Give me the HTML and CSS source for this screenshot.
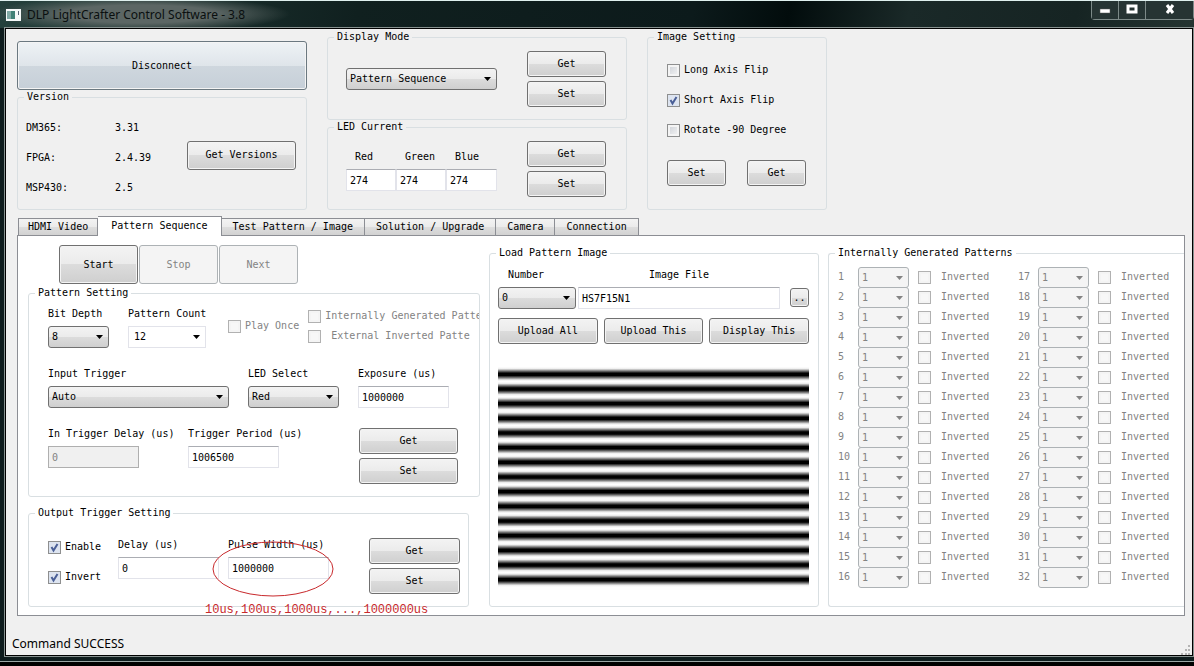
FILE: index.html
```html
<!DOCTYPE html>
<html lang="en">
  <head>
    <meta charset="UTF-8" />
    <meta name="viewport" content="width=device-width, initial-scale=1.0" />
    <title>DLP LightCrafter Control Software - 3.8</title>
    <link rel="stylesheet" href="styles.css">
  </head>
  <body>
    <header class="titlebar">
      <svg class="app-icon" width="15" height="12" viewBox="0 0 15 12">
        <rect width="15" height="12" fill="#f4f8f8" />
        <rect x="1" y="2" width="8" height="8" fill="#3f8076" />
        <rect x="1" y="2" width="4" height="8" fill="#7fa9a4" />
        <rect x="12" y="2" width="1" height="4" fill="#567" />
      </svg>
      <h1>DLP LightCrafter Control Software - 3.8</h1>
      <div class="window-buttons">
        <button aria-label="Minimize">
          <svg width="12" height="10" viewBox="0 0 12 10"><rect x="1" y="5" width="10" height="4" fill="#fff" stroke="#555" stroke-width="0.5" /></svg>
        </button>
        <button aria-label="Maximize">
          <svg width="12" height="10" viewBox="0 0 12 10"><rect x="2" y="2" width="8" height="6" fill="none" stroke="#fff" stroke-width="3" /></svg>
        </button>
        <button class="close" aria-label="Close">
          <svg width="12" height="10" viewBox="0 0 12 10"><path d="M3 1l6 8M9 1l-6 8" stroke="#fff" stroke-width="3" /></svg>
        </button>
      </div>
    </header>

    <main class="client">
      <div class="top">
        <div class="column">
          <button class="btn disconnect">Disconnect</button>
          <fieldset class="group grow">
            <legend>Version</legend>
            <div class="group-body version">
              <dl>
                <dt>DM365:</dt>
                <dd>3.31</dd>
                <dt>FPGA:</dt>
                <dd>2.4.39</dd>
                <dt>MSP430:</dt>
                <dd>2.5</dd>
              </dl>
              <button class="btn">Get Versions</button>
            </div>
          </fieldset>
        </div>

        <div class="column">
          <fieldset class="group grow">
            <legend>Display Mode</legend>
            <div class="group-body mode">
              <select aria-label="Display Mode">
                <option>Pattern Sequence</option>
              </select>
              <div class="stack">
                <button class="btn">Get</button>
                <button class="btn">Set</button>
              </div>
            </div>
          </fieldset>
          <fieldset class="group grow">
            <legend>LED Current</legend>
            <div class="group-body mode">
              <div class="led">
                <label for="led-red">Red</label>
                <label for="led-green">Green</label>
                <label for="led-blue">Blue</label>
                <input type="text" id="led-red" value="274" />
                <input type="text" id="led-green" value="274" />
                <input type="text" id="led-blue" value="274" />
              </div>
              <div class="stack">
                <button class="btn">Get</button>
                <button class="btn">Set</button>
              </div>
            </div>
          </fieldset>
        </div>

        <fieldset class="group">
          <legend>Image Setting</legend>
          <div class="group-body image-setting">
            <label class="check"><input type="checkbox" />Long Axis Flip</label>
            <label class="check"><input type="checkbox" checked />Short Axis Flip</label>
            <label class="check"><input type="checkbox" />Rotate -90 Degree</label>
            <div class="buttons">
              <button class="btn">Set</button>
              <button class="btn">Get</button>
            </div>
          </div>
        </fieldset>
      </div>

      <div class="tabs" role="tablist">
        <button role="tab">HDMI Video</button>
        <button role="tab" class="active" aria-selected="true">Pattern Sequence</button>
        <button role="tab">Test Pattern / Image</button>
        <button role="tab">Solution / Upgrade</button>
        <button role="tab">Camera</button>
        <button role="tab">Connection</button>
      </div>

      <section class="panel" role="tabpanel">
        <div class="sequence">
          <div class="run">
            <button class="btn">Start</button>
            <button class="btn" disabled>Stop</button>
            <button class="btn" disabled>Next</button>
          </div>

          <fieldset class="group">
            <legend>Pattern Setting</legend>
            <div class="group-body pattern">
              <div class="row">
                <div class="field w-61">
                  <label for="bit-depth">Bit Depth</label>
                  <select id="bit-depth"><option>8</option></select>
                </div>
                <div class="field w-78">
                  <label for="pattern-count">Pattern Count</label>
                  <select id="pattern-count" class="editable"><option>12</option></select>
                </div>
                <div class="options">
                  <label class="check disabled"><input type="checkbox" disabled />Play Once</label>
                  <div class="sources">
                    <label class="check disabled"><input type="checkbox" disabled />Internally Generated Patte</label>
                    <label class="check disabled external"><input type="checkbox" disabled />External Inverted Patte</label>
                  </div>
                </div>
              </div>
              <div class="row">
                <div class="field w-181">
                  <label for="input-trigger">Input Trigger</label>
                  <select id="input-trigger"><option>Auto</option></select>
                </div>
                <div class="field w-91">
                  <label for="led-select">LED Select</label>
                  <select id="led-select"><option>Red</option></select>
                </div>
                <div class="field w-91">
                  <label for="exposure">Exposure (us)</label>
                  <input type="text" id="exposure" value="1000000" />
                </div>
              </div>
              <div class="row triggers">
                <div class="field w-91">
                  <label for="in-delay">In Trigger Delay (us)</label>
                  <input type="text" id="in-delay" value="0" disabled />
                </div>
                <div class="field w-91">
                  <label for="period">Trigger Period (us)</label>
                  <input type="text" id="period" value="1006500" />
                </div>
                <div class="stack">
                  <button class="btn">Get</button>
                  <button class="btn">Set</button>
                </div>
              </div>
            </div>
          </fieldset>

          <fieldset class="group output">
            <legend>Output Trigger Setting</legend>
            <div class="group-body">
              <div class="checks">
                <label class="check"><input type="checkbox" checked />Enable</label>
                <label class="check"><input type="checkbox" checked />Invert</label>
              </div>
              <div class="field w-101">
                <label for="delay">Delay (us)</label>
                <input type="text" id="delay" value="0" />
              </div>
              <div class="field w-101">
                <label for="pulse">Pulse Width (us)</label>
                <input type="text" id="pulse" value="1000000" />
              </div>
              <div class="stack">
                <button class="btn">Get</button>
                <button class="btn">Set</button>
              </div>
              <svg class="circle" width="122" height="56" viewBox="0 0 122 56">
                <ellipse cx="61" cy="28" rx="60" ry="27" fill="none" stroke="#c8292c" />
              </svg>
              <p class="note">10us,100us,1000us,...,1000000us</p>
            </div>
          </fieldset>
        </div>

        <fieldset class="group load">
          <legend>Load Pattern Image</legend>
          <div class="group-body">
            <div class="file">
              <div class="field w-78 number">
                <label for="number">Number</label>
                <select id="number"><option>0</option></select>
              </div>
              <div class="field name">
                <label for="image-file">Image File</label>
                <input type="text" id="image-file" value="HS7F15N1" />
              </div>
              <button class="btn browse">..</button>
            </div>
            <div class="uploads">
              <button class="btn">Upload All</button>
              <button class="btn">Upload This</button>
              <button class="btn">Display This</button>
            </div>
            <div class="fringes" role="img" aria-label="Pattern preview"></div>
          </div>
        </fieldset>

        <fieldset class="group internal">
          <legend>Internally Generated Patterns</legend>
          <div class="group-body" id="patterns"></div>
        </fieldset>
      </section>

      <footer class="status">
        <span>Command SUCCESS</span>
        <svg class="grip" width="10" height="10" viewBox="0 0 10 10" fill="#b4b4b4">
          <path d="M7 0h2v2h-2zM4 4h2v2h-2zM7 4h2v2h-2zM0 8h2v2h-2zM4 8h2v2h-2zM7 8h2v2h-2z" />
        </svg>
      </footer>
    </main>
    <script src="script.js"></script>
  </body>
</html>
```
FILE: styles.css
```css
:root {
  --face: #f0f0f0;
  --text: #000;
  --muted: #838383;
  --line: #d9dfe2;
  --btn-border: #707070;
  --mono: "DejaVu Sans Mono", "Liberation Mono", monospace;
  --ui: "Noto Sans", "Open Sans", sans-serif;
}

* {
  box-sizing: border-box;
}

body {
  margin: 0;
  min-height: 100vh;
  display: flex;
  flex-direction: column;
  background: #0e1c1d;
  border-top: 1px solid #dff0ee;
  border-bottom: 4px solid #000;
  box-shadow: inset 0 -1px #9aa5a4;
  color: var(--text);
  font: 10px/12px var(--mono);
}

button,
input,
select {
  font: inherit;
  color: inherit;
  margin: 0;
}

/* Title bar */
.titlebar {
  display: flex;
  align-items: center;
  height: 27px;
  padding-left: 6px;
  gap: 6px;
  background:
    radial-gradient(ellipse 150px 18px at 140px 13px, #5c6664 50%, transparent),
    linear-gradient(100deg, #24403c 0, #10201f 30%, #0c1a1b 58%, #020c0c 66%, #1a2928 76%, #162423 90%, #253431);

  h1 {
    margin: 0;
    font: 12px/16px var(--ui);
    color: #0a0f0f;
  }
}

.window-buttons {
  display: flex;
  align-self: flex-start;
  margin-left: auto;
  border: 1px solid #7d8a88;
  border-top: 0;
  border-radius: 0 0 4px 4px;

  button {
    width: 27px;
    height: 18px;
    padding: 0;
    background: #263433;
    border: 0;
    border-right: 1px solid #7d8a88;
  }

  .close {
    width: 47px;
    border-right: 0;
  }
}

.client {
  flex: 1;
  display: flex;
  flex-direction: column;
  margin: 0 1px 6px 5px;
  background: var(--face);
  border: 1px solid #000;
  outline: 1px solid #87918f;
}

/* Buttons */
.btn {
  height: 26px;
  padding: 0;
  border: 1px solid var(--btn-border);
  border-radius: 3px;
  background: linear-gradient(#f3f3f3, #ebebeb 50%, #dcdcdc 50%, #cfcfcf);
  box-shadow: inset 0 0 0 1px #f4f4f4;

  &:disabled {
    background: #f4f4f4;
    border-color: #adb2b5;
    color: var(--muted);
  }
}

.stack {
  display: flex;
  flex-direction: column;
  gap: 4px;
}

/* Inputs */
input[type="text"],
select {
  height: 22px;
  width: 100%;
  padding: 0 3px;
  border: 1px solid #e2e3ea;
  border-top-color: #abadb3;
  border-radius: 0;
  background: #fff;
}

input[type="text"]:disabled {
  background: var(--face);
  border-color: #afafaf;
  color: var(--muted);
}

select {
  appearance: none;
  border: 1px solid var(--btn-border);
  border-radius: 3px;
  background:
    url("data:image/svg+xml,%3Csvg xmlns='http://www.w3.org/2000/svg' width='7' height='4'%3E%3Cpath d='M0 0h7L3.5 4z'/%3E%3C/svg%3E") no-repeat right 5px center,
    linear-gradient(#f3f3f3, #ebebeb 50%, #dcdcdc 50%, #cfcfcf);

  &.editable {
    padding-left: 5px;
    border-color: #e2e3ea;
    border-radius: 0;
    background-color: #fff;
    background-image: url("data:image/svg+xml,%3Csvg xmlns='http://www.w3.org/2000/svg' width='7' height='4'%3E%3Cpath d='M0 0h7L3.5 4z'/%3E%3C/svg%3E");
  }

  &:disabled {
    opacity: 1;
    border-color: #adb2b5;
    color: var(--muted);
    background-color: #f4f4f4;
    background-image: url("data:image/svg+xml,%3Csvg xmlns='http://www.w3.org/2000/svg' width='7' height='4'%3E%3Cpath fill='%23838383' d='M0 0h7L3.5 4z'/%3E%3C/svg%3E");
  }
}

input[type="checkbox"] {
  appearance: none;
  flex: none;
  width: 13px;
  height: 13px;
  border: 1px solid #8e8f8f;
  background: linear-gradient(135deg, #cbcfd5, #f6f6f6);
  box-shadow: inset 0 0 0 2px #f4f4f4;

  &:checked {
    background: url("data:image/svg+xml,%3Csvg xmlns='http://www.w3.org/2000/svg' width='11' height='11'%3E%3Cpath d='M2.5 5l2 3.5L8.5 2' fill='none' stroke='%234a5f97' stroke-width='2'/%3E%3C/svg%3E") no-repeat, #dde4f0;
    box-shadow: none;
  }

  &:disabled {
    border-color: #b1b1b1;
    background: #f7f7f7;
  }
}

.check {
  display: flex;
  align-items: center;
  gap: 4px;
  white-space: nowrap;
}

.disabled {
  color: var(--muted);
}

.field {
  display: flex;
  flex-direction: column;
  gap: 6px;
  white-space: nowrap;
}

.w-61 { width: 61px; }
.w-78 { width: 78px; }
.w-91 { width: 91px; }
.w-101 { width: 101px; }
.w-181 { width: 181px; }

/* Group boxes */
.group {
  min-width: 0;
  margin: 0;
  padding: 0 0 0 6px;
  border: 1px solid var(--line);
  border-radius: 3px;

  legend {
    padding: 0 3px;
  }
}

.grow {
  flex: 1;
}

.top {
  display: grid;
  grid-template-columns: 290px 300px 180px;
  gap: 20px;
  padding: 2px 11px 0;
}

.column {
  display: flex;
  flex-direction: column;
  gap: 1px;
}

.disconnect {
  height: 49px;
  margin-top: 10px;
  border-color: #6b7880;
  background: linear-gradient(#eef2f5, #dfe5ea 50%, #cfd7de 50%, #c6cfd8);
}

.version {
  display: flex;
  align-items: center;
  padding: 10px 10px 6px 2px;

  dl {
    display: grid;
    grid-template-columns: 89px 72px;
    margin: 0;
    line-height: 30px;
  }

  dd {
    margin: 0;
  }

  .btn {
    width: 109px;
    height: 29px;
    margin-bottom: 6px;
  }
}

.mode {
  display: flex;
  align-items: center;
  gap: 30px;
  padding: 8px 0 12px 12px;

  select {
    width: 151px;
  }

  .btn {
    width: 79px;
  }
}

.led {
  display: grid;
  grid-template-columns: 50px 50px 51px;
  row-gap: 6px;
  padding-top: 4px;

  label {
    padding-left: 9px;
  }
}

.image-setting {
  padding: 12px 13px 22px;

  .check {
    height: 30px;
  }

  .buttons {
    display: flex;
    gap: 21px;
    margin-top: 15px;
  }

  .btn {
    width: 59px;
  }
}

/* Tabs */
.tabs {
  display: flex;
  align-items: flex-end;
  margin: 6px 11px 0;
  padding-left: 1px;

  button {
    height: 17px;
    padding: 0 11px;
    border: 1px solid #8c8e94;
    border-width: 1px 1px 0 0;
    background: linear-gradient(#f3f3f3, #ebebeb 50%, #dedede 50%, #d2d2d2);
  }

  button:first-child {
    padding: 0 9px;
    border-left-width: 1px;
  }

  .active {
    position: relative;
    height: 20px;
    margin-bottom: -1px;
    padding: 0 13px 2px;
    background: #fff;
  }
}

.panel {
  flex: 1;
  display: flex;
  gap: 9px;
  margin: 0 7px 0 11px;
  padding: 9px 0 8px 10px;
  background: #fff;
  border: 1px solid #8c8e94;
}

.sequence {
  flex: none;
  width: 452px;
}

.run {
  display: flex;
  gap: 1px;
  margin: 0 0 3px 31px;

  .btn {
    width: 79px;
    height: 39px;
  }
}

.pattern {
  display: flex;
  flex-direction: column;
  gap: 20px;
  padding: 9px 0 12px 13px;
}

.row {
  display: flex;
  gap: 19px;
}

.options {
  flex: 1;
  display: flex;
  align-items: center;
  gap: 9px;
  min-width: 0;
  height: 36px;
  padding-left: 3px;

  .sources {
    flex: 1;
    min-width: 0;
    overflow: hidden;
  }

  .check {
    height: 20px;
  }

  .external {
    gap: 10px;
  }
}

.triggers {
  gap: 49px;

  .stack {
    margin: 0 21px 0 auto;
  }

  .btn {
    width: 99px;
  }
}

.output {
  width: 441px;
  margin-top: 10px;

  .group-body {
    position: relative;
    display: flex;
    align-items: flex-end;
    padding: 13px 8px 12px 13px;
  }

  .checks {
    width: 70px;
    margin-bottom: 2px;
  }

  .check {
    height: 30px;
  }

  .field {
    margin: 0 9px 15px 0;
  }

  .stack {
    margin-left: auto;
  }

  .btn {
    width: 91px;
  }
}

/* Hand-drawn remark over the pulse width field */
.circle {
  position: absolute;
  left: 177px;
  top: 22px;
}

.note {
  position: absolute;
  left: 170px;
  top: 84px;
  margin: 0;
  font: 12px/14px "Liberation Mono", monospace;
  color: #c8292c;
  white-space: nowrap;
}

.load {
  flex: none;
  width: 330px;
  margin-top: 2px;

  .group-body {
    padding: 10px 9px 0 2px;
  }

  .file {
    display: flex;
    align-items: flex-end;
    gap: 2px;
  }

  .number label {
    padding-left: 10px;
  }

  .name {
    flex: 1;
    text-align: center;
  }

  .browse {
    width: 19px;
    height: 19px;
    margin: 0 0 2px 8px;
  }

  .uploads {
    display: flex;
    gap: 6px;
    margin-top: 9px;

    .btn {
      flex: 1;
    }
  }
}

.fringes {
  --period: calc(100% / 15);
  height: 220px;
  margin-top: 23px;
  background: repeating-linear-gradient(
    #fff 0,
    #eee calc(var(--period) * 0.12),
    #777 calc(var(--period) * 0.27),
    #000 calc(var(--period) * 0.42),
    #000 calc(var(--period) * 0.58),
    #777 calc(var(--period) * 0.73),
    #eee calc(var(--period) * 0.88),
    #fff var(--period)
  );
}

.internal {
  flex: 1;
  margin-top: 2px;
  border-right: 0;
  border-radius: 3px 0 0 3px;

  .group-body {
    display: grid;
    grid-template: repeat(16, 20px) / 180px 1fr;
    grid-auto-flow: column;
    padding: 8px 0 0 3px;
    color: var(--muted);
  }
}

.slot {
  display: flex;
  align-items: center;

  select {
    flex: none;
    align-self: flex-start;
    width: 51px;
    height: 21px;
    margin-right: 9px;
  }

  .slot-number {
    width: 20px;
  }

  .check {
    gap: 10px;
  }
}

.status {
  display: flex;
  align-items: center;
  justify-content: space-between;
  height: 39px;
  padding: 16px 1px 0 6px;
  font: 12px/16px var(--ui);

  .grip {
    align-self: flex-end;
  }
}
```
FILE: script.js
```js
const patterns = document.getElementById("patterns");

for (let i = 1; i <= 32; i++) {
  const slot = document.createElement("div");
  slot.className = "slot";
  slot.innerHTML = `
    <label class="slot-number" for="pattern-${i}">${i}</label>
    <select id="pattern-${i}" disabled><option>1</option></select>
    <label class="check"><input type="checkbox" disabled />Inverted</label>
  `;
  patterns.append(slot);
}
```
